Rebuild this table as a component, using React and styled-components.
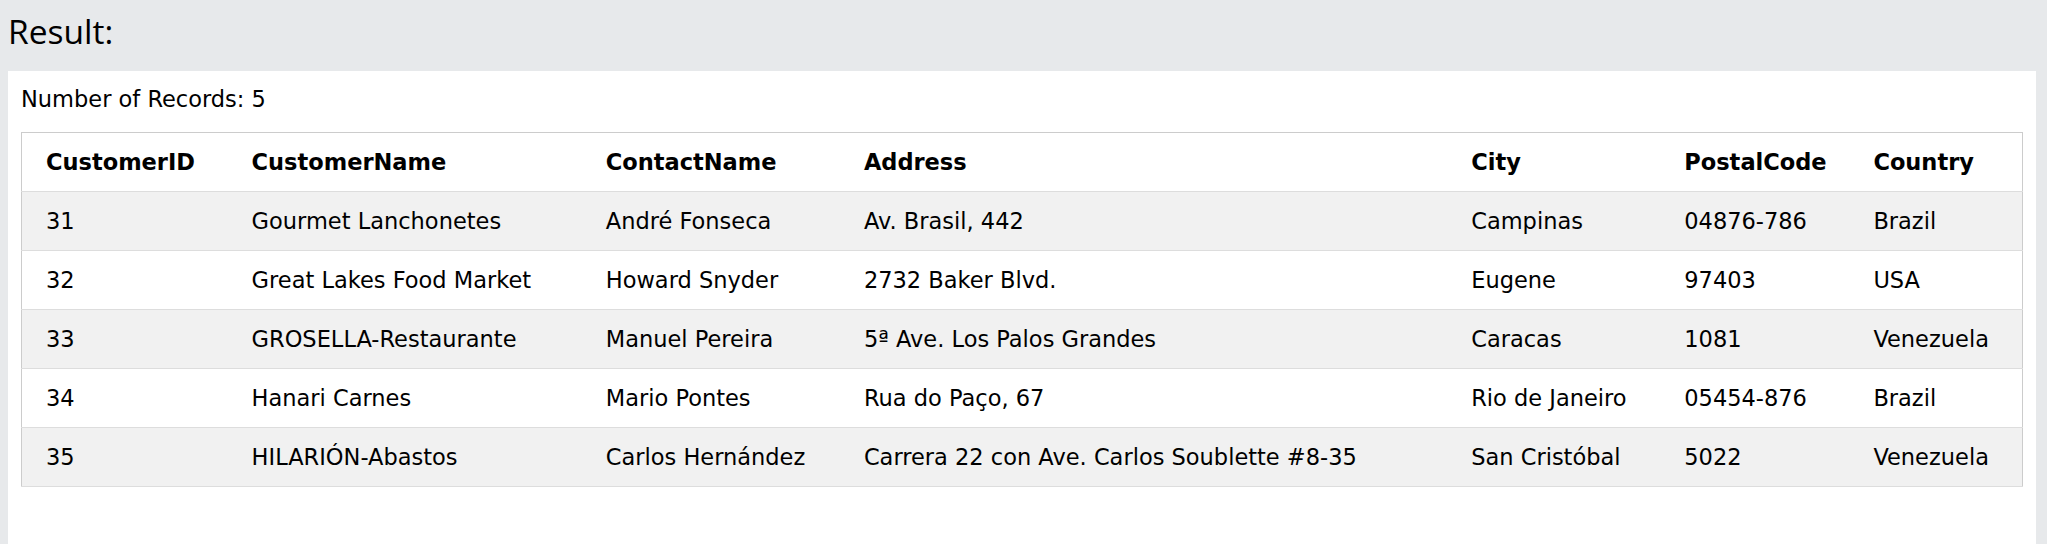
import React from "react";
import styled, { createGlobalStyle } from "styled-components";

const GlobalStyle = createGlobalStyle`
  html, body {
    margin: 0;
    padding: 0;
    background: #e7e9eb;
  }
  body {
    font-family: "DejaVu Sans", Verdana, sans-serif;
    color: #000;
  }
`;

const Page = styled.div`
  display: flex;
  flex-direction: column;
  min-height: 544px;
  background: #e7e9eb;
`;

const ResultTitle = styled.h2`
  margin: 0;
  padding: 9px 0 0 8px;
  height: 71px;
  box-sizing: border-box;
  font-family: "Open Sans", "Noto Sans", sans-serif;
  font-weight: 400;
  font-size: 33.5px;
  line-height: 44px;
  color: #000;
`;

const Panel = styled.div`
  flex: 1;
  margin: 0 11px 0 8px;
  padding: 12px 13px 40px 13px;
  background: #fff;
`;

const RecordCount = styled.div`
  font-size: 22.5px;
  line-height: 33.75px;
  margin-bottom: 15px;
`;

const Table = styled.table`
  width: 100%;
  border-collapse: collapse;
  border-spacing: 0;
  table-layout: fixed;
  border: 1px solid #ccc;
  font-size: 22.5px;
  line-height: 34px;
`;

const Col = styled.col`
  width: ${(p) => p.$w}px;
`;

const Row = styled.tr`
  border-bottom: 1px solid #ddd;
  background: #fff;
  tbody &:nth-child(odd) {
    background: #f1f1f1;
  }
`;

const HeadCell = styled.th`
  text-align: left;
  font-weight: 700;
  padding: 12px 12px;
  white-space: nowrap;
  &:first-child {
    padding-left: 24px;
  }
`;

const Cell = styled.td`
  padding: 12px 12px;
  white-space: nowrap;
  &:first-child {
    padding-left: 24px;
  }
`;

const columns = [
  { name: "CustomerID", w: 218 },
  { name: "CustomerName", w: 354 },
  { name: "ContactName", w: 258 },
  { name: "Address", w: 607 },
  { name: "City", w: 213 },
  { name: "PostalCode", w: 189 },
  { name: "Country", w: 161 },
];

const rows = [
  ["31", "Gourmet Lanchonetes", "André Fonseca", "Av. Brasil, 442", "Campinas", "04876-786", "Brazil"],
  ["32", "Great Lakes Food Market", "Howard Snyder", "2732 Baker Blvd.", "Eugene", "97403", "USA"],
  ["33", "GROSELLA-Restaurante", "Manuel Pereira", "5ª Ave. Los Palos Grandes", "Caracas", "1081", "Venezuela"],
  ["34", "Hanari Carnes", "Mario Pontes", "Rua do Paço, 67", "Rio de Janeiro", "05454-876", "Brazil"],
  ["35", "HILARIÓN-Abastos", "Carlos Hernández", "Carrera 22 con Ave. Carlos Soublette #8-35", "San Cristóbal", "5022", "Venezuela"],
];

export default function App() {
  return (
    <>
      <GlobalStyle />
      <Page>
        <ResultTitle>Result:</ResultTitle>
        <Panel>
          <RecordCount>Number of Records: 5</RecordCount>
          <Table>
            <colgroup>
              {columns.map((c) => (
                <Col key={c.name} $w={c.w} />
              ))}
            </colgroup>
            <thead>
              <Row>
                {columns.map((c) => (
                  <HeadCell key={c.name}>{c.name}</HeadCell>
                ))}
              </Row>
            </thead>
            <tbody>
              {rows.map((r) => (
                <Row key={r[0]}>
                  {r.map((v, i) => (
                    <Cell key={i}>{v}</Cell>
                  ))}
                </Row>
              ))}
            </tbody>
          </Table>
        </Panel>
      </Page>
    </>
  );
}
